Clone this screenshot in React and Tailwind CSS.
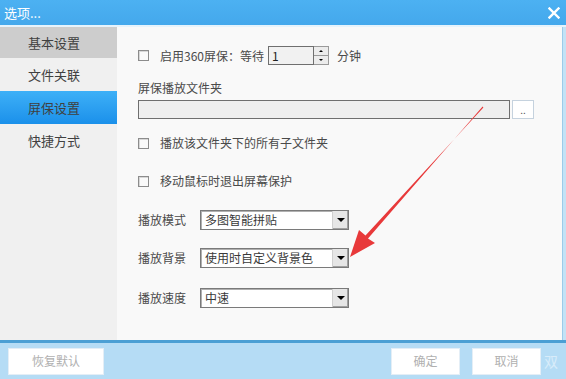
import React from "react";

const font = { fontFamily: '"Noto Sans CJK SC", "Noto Sans", sans-serif' };

function Checkbox({ label }) {
  return (
    <div className="flex items-center h-[16px]">
      <span className="w-[11px] h-[11px] border border-[#8c8c8c] bg-[#fafafa] shadow-[inset_1px_1px_0_#d8d8d8]" />
      <span className="ml-[11px] text-[12px] text-[#4a4a4a] leading-none">{label}</span>
    </div>
  );
}

function Select({ value }) {
  return (
    <div className="ml-[13px] w-[149px] h-[20px] border border-[#7a7a7a] bg-white flex items-stretch shadow-[inset_1px_1px_0_#b0b0b0]">
      <span className="flex-1 pl-[4px] text-[12px] text-[#3a3a3a] leading-[18px]">{value}</span>
      <span className="w-[16px] bg-[#e6e6e6] border-l border-[#d0d0d0] flex items-center justify-center shadow-[inset_-1px_-1px_0_#a0a0a0]">
        <span className="w-0 h-0 border-l-[4px] border-r-[4px] border-t-[4px] border-l-transparent border-r-transparent border-t-black" />
      </span>
    </div>
  );
}

function SelectRow({ label, value, mt }) {
  return (
    <div className={`flex items-center ${mt}`}>
      <span className="w-[49px] text-[12px] text-[#4a4a4a]">{label}</span>
      <Select value={value} />
    </div>
  );
}

export default function App() {
  const nav = ["基本设置", "文件关联", "屏保设置", "快捷方式"];
  return (
    <div className="w-[566px] h-[379px] flex flex-col overflow-hidden relative" style={font}>
      <div className="h-[25px] bg-gradient-to-b from-[#4cb1f2] to-[#44a8ec] flex items-center justify-between pl-[4px] pr-[6px]">
        <span className="text-white text-[13px]">选项...</span>
        <svg width="12" height="12" viewBox="0 0 12 12">
          <path d="M1.5 1.5 L10.5 10.5 M10.5 1.5 L1.5 10.5" stroke="white" strokeWidth="2.4" strokeLinecap="square" />
        </svg>
      </div>
      <div className="h-[2px] bg-[#e6f3fc]" />
      <div className="flex h-[313px]">
        <div className="w-[117px] bg-[#f0f0f0] flex flex-col">
          {nav.map((n, i) => (
            <div
              key={n}
              className={`pl-[28px] flex items-center text-[13px] text-[#404040] ${
                i === 0 ? "h-[31px] bg-[#cdcdcd]" : "h-[33px]"
              } ${i === 2 ? "bg-gradient-to-b from-[#3db0f7] to-[#1a90ea]" : ""}`}
            >
              {n}
            </div>
          ))}
        </div>
        <div className="flex-1 bg-[#f9f9f9] border-r border-[#9ccbe9] pl-[21px] flex flex-col">
          <div className="flex items-center mt-[19px] h-[19px]">
            <span className="w-[11px] h-[11px] border border-[#8c8c8c] bg-[#fafafa] shadow-[inset_1px_1px_0_#d8d8d8]" />
            <span className="ml-[11px] text-[12px] text-[#4a4a4a]">启用360屏保：等待</span>
            <div className="ml-[4px] flex h-[19px]">
              <div className="w-[46px] border border-[#6f6f6f] bg-[#f1f1f1] pl-[3px] text-[12px] leading-[17px] text-[#222]">1</div>
              <div className="w-[15px] flex flex-col border border-l-0 border-[#9a9a9a]">
                <div className="flex-1 bg-[#ececec] border-b border-[#9a9a9a] flex items-center justify-center">
                  <span className="w-0 h-0 border-l-[2px] border-r-[2px] border-b-[2px] border-l-transparent border-r-transparent border-b-black" />
                </div>
                <div className="flex-1 bg-[#ececec] flex items-center justify-center">
                  <span className="w-0 h-0 border-l-[2px] border-r-[2px] border-t-[2px] border-l-transparent border-r-transparent border-t-black" />
                </div>
              </div>
            </div>
            <span className="ml-[8px] text-[12px] text-[#4a4a4a]">分钟</span>
          </div>
          <div className="mt-[15px] text-[12px] text-[#4a4a4a] leading-[16px]">屏保播放文件夹</div>
          <div className="mt-[4px] flex h-[19px]">
            <div className="w-[372px] border border-[#6f6f6f] bg-[#efefef]" />
            <div className="ml-[2px] w-[22px] border border-[#c5d2de] bg-white text-[10px] text-[#555] flex items-center justify-center leading-none">..</div>
          </div>
          <div className="mt-[16px]">
            <Checkbox label="播放该文件夹下的所有子文件夹" />
          </div>
          <div className="mt-[22px]">
            <Checkbox label="移动鼠标时退出屏幕保护" />
          </div>
          <SelectRow label="播放模式" value="多图智能拼贴" mt="mt-[21px]" />
          <SelectRow label="播放背景" value="使用时自定义背景色" mt="mt-[18px]" />
          <SelectRow label="播放速度" value="中速" mt="mt-[20px]" />
        </div>
        <div className="w-[3px] bg-[#c3e2f6]" />
      </div>
      <div className="h-[3px] bg-[#4b9fd4]" />
      <div className="flex-1 bg-[#b5dcf5] flex items-center px-[8px]">
        <div className="w-[96px] h-[27px] bg-white border border-[#e4eef6] flex items-center justify-center text-[12px] text-[#b0b0b0]">恢复默认</div>
        <div className="ml-auto w-[69px] h-[27px] bg-white border border-[#e4eef6] flex items-center justify-center text-[12px] text-[#b0b0b0]">确定</div>
        <div className="ml-[12px] w-[69px] h-[27px] bg-white border border-[#e4eef6] flex items-center justify-center text-[12px] text-[#b0b0b0]">取消</div>
        <span className="ml-[3px] text-[14px] text-[#d8ecfa]">双</span>
      </div>
      <svg className="absolute left-0 top-0 pointer-events-none" width="566" height="379" viewBox="0 0 566 379">
        <polygon points="350,257 359,230 365.5,235.5 483.4,107.4 482.6,106.6 368,238.5 375,243" fill="#e8393a" />
      </svg>
    </div>
  );
}
